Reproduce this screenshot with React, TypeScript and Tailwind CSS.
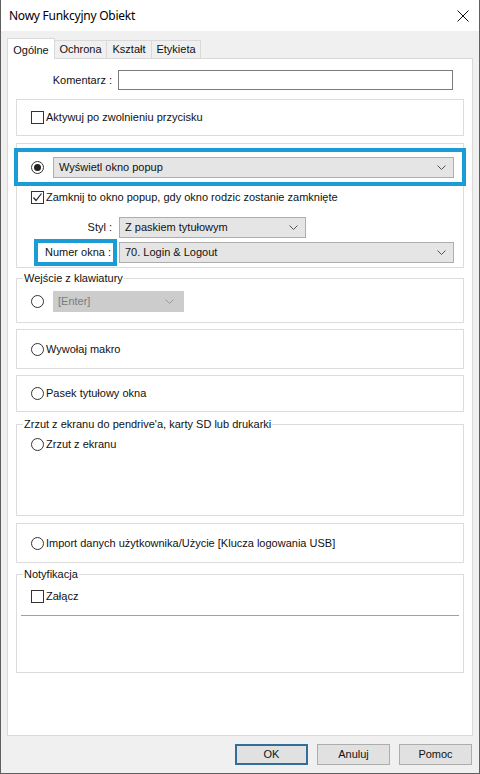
import type { ReactNode } from "react";

function Radio({ checked = false }: { checked?: boolean }) {
  return (
    <span className="flex h-[13px] w-[13px] shrink-0 items-center justify-center rounded-full border border-[#333] bg-white">
      {checked && <span className="h-[7px] w-[7px] rounded-full bg-[#222]" />}
    </span>
  );
}

function Checkbox({ checked = false }: { checked?: boolean }) {
  return (
    <span className="flex h-[13px] w-[13px] shrink-0 items-center justify-center border border-[#333] bg-white">
      {checked && (
        <svg viewBox="0 0 11 11" className="h-[11px] w-[11px]" fill="none" stroke="#222" strokeWidth="1.2">
          <path d="M1.5 5.5 L4 8.5 L9.5 1.5" />
        </svg>
      )}
    </span>
  );
}

function Chevron({ color = "#555" }: { color?: string }) {
  return (
    <svg viewBox="0 0 9 5" className="h-[5px] w-[9px]" fill="none" stroke={color} strokeWidth="1">
      <path d="M0.5 0.5 L4.5 4.5 L8.5 0.5" />
    </svg>
  );
}

function Select({ value, className }: { value: string; className: string }) {
  return (
    <div
      className={`flex h-[21px] items-center justify-between border border-[#adadad] bg-[#e5e5e5] pl-[5px] pr-[7px] text-[#111] ${className}`}
    >
      <span className="whitespace-nowrap">{value}</span>
      <Chevron />
    </div>
  );
}

function Group({ label, className, children }: { label?: string; className: string; children?: ReactNode }) {
  return (
    <fieldset className={`mx-[8px] border border-[#dcdcdc] ${className}`}>
      {label && <legend className="ml-[6px] px-[1px] leading-[14px] text-[#111]">{label}</legend>}
      {children}
    </fieldset>
  );
}

function Option({ h, children }: { h: string; children: ReactNode }) {
  return <div className={`flex items-center gap-[2px] pl-[14px] ${h}`}>{children}</div>;
}

export default function App() {
  return (
    <div className="flex h-[774px] w-[480px] flex-col border-x border-b border-[#5f5f5f] bg-[#f0f0f0] font-['Liberation_Sans',Arial,sans-serif] text-[11px] text-[#111]">
      {/* title bar */}
      <div className="flex h-[31px] items-center justify-between bg-white pl-[8px] pr-[10px]">
        <span className="font-['Noto_Sans',sans-serif] text-[12px] tracking-[-0.25px] text-black">Nowy Funkcyjny Obiekt</span>
        <svg viewBox="0 0 12 12" className="h-[12px] w-[12px]" fill="none" stroke="#111" strokeWidth="1">
          <path d="M0.5 0.5 L11.5 11.5 M11.5 0.5 L0.5 11.5" />
        </svg>
      </div>

      {/* tabs */}
      <div className="mt-[7px] flex h-[20px] items-end pl-[6px]">
        <div className="z-10 -mb-px flex h-[21px] w-[48px] items-start justify-center border border-b-0 border-[#d9d9d9] bg-white pt-[3px]">
          Ogólne
        </div>
        <div className="flex h-[18px] w-[52px] items-center justify-center border border-l-0 border-b-0 border-[#d9d9d9]">Ochrona</div>
        <div className="flex h-[18px] w-[45px] items-center justify-center border border-l-0 border-b-0 border-[#d9d9d9]">Kształt</div>
        <div className="flex h-[18px] w-[49px] items-center justify-center border border-l-0 border-b-0 border-[#d9d9d9]">Etykieta</div>
      </div>

      {/* panel */}
      <div className="mx-[6px] flex h-[678px] flex-col border border-[#d9d9d9] bg-white">
        <div className="mt-[11px] flex items-center">
          <span className="w-[104px] text-right">Komentarz :</span>
          <div className="ml-[6px] h-[20px] w-[335px] border border-[#7a7a7a] bg-white" />
        </div>

        <Group className="mt-[9px] h-[37px]">
          <Option h="h-[35px]">
            <Checkbox />
            <span>Aktywuj po zwolnieniu przycisku</span>
          </Option>
        </Group>

        <Group className="mt-[7px] h-[125px]">
          <div className="-mx-[3px] mt-[4px] flex h-[38px] items-center border-4 border-[#1a9cd6] pl-[13px]">
            <Radio checked />
            <Select value="Wyświetl okno popup" className="ml-[9px] w-[401px]" />
          </div>
          <div className="mt-[3px] flex items-center gap-[2px] pl-[14px]">
            <Checkbox checked />
            <span>Zamknij to okno popup, gdy okno rodzic zostanie zamknięte</span>
          </div>
          <div className="mt-[11px] flex items-center">
            <span className="w-[95px] text-right">Styl :</span>
            <Select value="Z paskiem tytułowym" className="ml-[7px] w-[187px]" />
          </div>
          <div className="mt-[1px] flex items-center">
            <div className="ml-[17px] flex h-[27px] w-[83px] items-center justify-end whitespace-nowrap border-4 border-[#1a9cd6] pr-[2px]">
              Numer okna :
            </div>
            <Select value="70. Login &amp; Logout" className="ml-[2px] w-[335px]" />
          </div>
        </Group>

        <Group label="Wejście z klawiatury" className="mt-[3px] h-[52px]">
          <div className="mt-[6px] flex items-center pl-[14px]">
            <Radio />
            <div className="ml-[9px] flex h-[21px] w-[131px] items-center justify-between bg-[#cccccc] pl-[5px] pr-[10px] text-[#7a7a7a]">
              <span>[Enter]</span>
              <Chevron color="#9a9a9a" />
            </div>
          </div>
        </Group>

        <Group className="mt-[6px] h-[40px]">
          <Option h="h-[38px]">
            <Radio />
            <span>Wywołaj makro</span>
          </Option>
        </Group>

        <Group className="mt-[6px] h-[37px]">
          <Option h="h-[35px]">
            <Radio />
            <span>Pasek tytułowy okna</span>
          </Option>
        </Group>

        <Group label="Zrzut z ekranu do pendrive'a, karty SD lub drukarki" className="mt-[5px] h-[99px]">
          <div className="mt-[5px] flex items-center gap-[2px] pl-[14px]">
            <Radio />
            <span>Zrzut z ekranu</span>
          </div>
        </Group>

        <Group className="mt-[7px] h-[40px]">
          <Option h="h-[38px]">
            <Radio />
            <span>Import danych użytkownika/Użycie [Klucza logowania USB]</span>
          </Option>
        </Group>

        <Group label="Notyfikacja" className="mt-[4px] h-[106px]">
          <div className="mt-[7px] flex items-center gap-[2px] pl-[14px]">
            <Checkbox />
            <span>Załącz</span>
          </div>
          <div className="mx-[4px] mt-[10px] h-px bg-[#a0a0a0]" />
        </Group>
      </div>

      {/* buttons */}
      <div className="mt-[8px] flex justify-end gap-[9px] pr-[7px]">
        <div className="flex h-[21px] w-[73px] items-center justify-center border-2 border-[#2f6f9a] bg-[#e1e1e1]">OK</div>
        <div className="flex h-[21px] w-[73px] items-center justify-center border border-[#adadad] bg-[#e1e1e1]">Anuluj</div>
        <div className="flex h-[21px] w-[73px] items-center justify-center border border-[#adadad] bg-[#e1e1e1]">Pomoc</div>
      </div>
    </div>
  );
}
